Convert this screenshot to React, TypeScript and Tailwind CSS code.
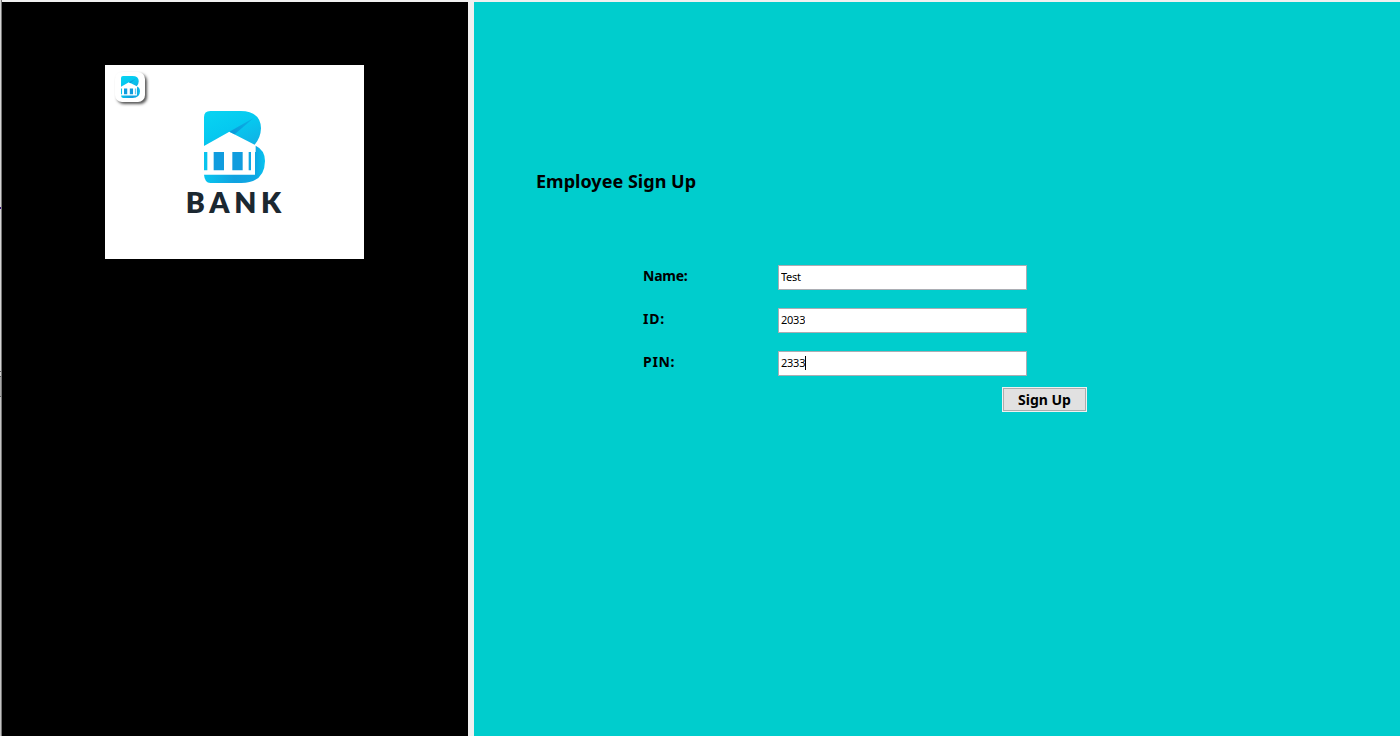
import { useState } from "react";

function BankMark({ id, className }: { id: string; className: string }) {
  return (
    <svg viewBox="12 15 183 216" preserveAspectRatio="none" className={className} aria-hidden="true">
      <defs>
        <linearGradient id={`${id}-top`} x1="0" y1="0" x2="0.7" y2="1">
          <stop offset="0" stopColor="#08d4f2" />
          <stop offset="0.55" stopColor="#05c9f0" />
          <stop offset="1" stopColor="#10b4e6" />
        </linearGradient>
        <linearGradient id={`${id}-low`} gradientUnits="userSpaceOnUse" x1="12" y1="0" x2="195" y2="0">
          <stop offset="0" stopColor="#08c6ef" />
          <stop offset="0.5" stopColor="#10a2e0" />
          <stop offset="0.85" stopColor="#0ea8e4" />
          <stop offset="1" stopColor="#08c4ef" />
        </linearGradient>
        <linearGradient id={`${id}-fold`} x1="1" y1="0" x2="0" y2="1">
          <stop offset="0" stopColor="#08b4e6" />
          <stop offset="1" stopColor="#0c97d9" />
        </linearGradient>
      </defs>
      <path d="M12 120V34Q12 15 31 15H122Q182 16 183 67Q182 96 164 116L88 77Z" fill={`url(#${id}-top)`} />
      <path d="M162 35L88 77L104 85Z" fill={`url(#${id}-fold)`} />
      <path
        d="M167 119Q195 132 195 165Q194 230 124 231H31Q14 230 12 206H165V138H167Z"
        fill={`url(#${id}-low)`}
      />
      <path d="M12 138H22V193H12ZM146 138H153V193H146Z" fill={`url(#${id}-low)`} />
      <path d="M41 138H72V193H41ZM97 138H128V193H97Z" fill="#109cde" />
    </svg>
  );
}

function Field({
  label,
  tracking,
  value,
  onChange,
  caret,
}: {
  label: string;
  tracking: string;
  value: string;
  onChange: (value: string) => void;
  caret?: boolean;
}) {
  return (
    <div className="flex h-[25px] items-start">
      <span className={`w-[135px] pt-px text-[14px] leading-5 font-bold ${tracking}`}>{label}</span>
      <label className="flex h-[25px] w-[249px] items-center border border-[#abadb3] bg-white pl-[2px] text-[11px]">
        <input
          aria-label={label}
          value={value}
          onChange={(event) => onChange(event.target.value)}
          className="h-5 w-6 min-w-0 bg-transparent p-0 pb-[2px] leading-[18px] tracking-[-0.25px] outline-none"
        />
        {caret && <span className="mb-px h-[14px] w-px bg-black" />}
      </label>
    </div>
  );
}

export default function App() {
  const [name, setName] = useState("Test");
  const [id, setId] = useState("2033");
  const [pin, setPin] = useState("2333");

  return (
    <div className="flex h-[736px] w-[1400px] overflow-hidden bg-[#f0f0f0] font-['Noto_Sans',sans-serif] text-black">
      <div className="flex w-[2px]">
        <div className="flex w-px flex-col bg-[#d4d4d4]">
          <div className="mt-[207px] h-[2px] bg-[#39127b]" />
          <div className="mt-[162px] h-px bg-[#666]" />
          <div className="mt-1 h-px bg-[#666]" />
          <div className="h-[19px] bg-[#aaa]" />
          <div className="h-px bg-[#666]" />
          <div className="grow bg-[#c4c4c4]" />
        </div>
        <div className="w-px bg-[#777]" />
      </div>

      <aside className="mt-[2px] w-[466px] bg-black pt-[63px] pl-[103px]">
        <div className="relative flex h-[194px] w-[259px] flex-col items-center bg-white pt-[46px]">
          <div className="absolute top-[7px] left-[10px] flex h-[30px] w-[30px] items-center justify-center rounded-[7px] bg-white shadow-[2px_2px_3px_#555]">
            <BankMark id="badge" className="h-[22px] w-[19px]" />
          </div>
          <BankMark id="mark" className="h-[72px] w-[61px]" />
          <svg viewBox="0 0 110 38" className="h-[38px] w-[110px]" role="img" aria-label="BANK">
            <text
              x="5.8"
              y="30"
              textLength="100"
              lengthAdjust="spacingAndGlyphs"
              fill="#1b2831"
              className="font-['Lato',sans-serif] text-[27.5px] font-extrabold tracking-[4.5px]"
            >
              BANK
            </text>
          </svg>
        </div>
      </aside>

      <main className="mt-[2px] ml-[6px] grow bg-[#00cdcd] pt-[166px]">
        <h1 className="ml-[62px] text-[18px] leading-[26px] font-bold tracking-[0.02px]">Employee Sign Up</h1>
        <form className="mt-[71px] ml-[169px] flex w-[444px] flex-col" onSubmit={(event) => event.preventDefault()}>
          <div className="flex flex-col gap-[18px]">
            <Field label="Name:" tracking="tracking-[-0.25px]" value={name} onChange={setName} />
            <Field label="ID:" tracking="tracking-[0.8px]" value={id} onChange={setId} />
            <Field label="PIN:" tracking="tracking-[0.7px]" value={pin} onChange={setPin} caret />
          </div>
          <div className="mt-[11px] flex h-[25px] w-[85px] self-end bg-[#f0f0f0] p-px">
            <button className="flex grow items-center justify-center border border-[#adadad] bg-[#e1e1e1] text-[14px] leading-5 font-bold">
              Sign Up
            </button>
          </div>
        </form>
      </main>
    </div>
  );
}
